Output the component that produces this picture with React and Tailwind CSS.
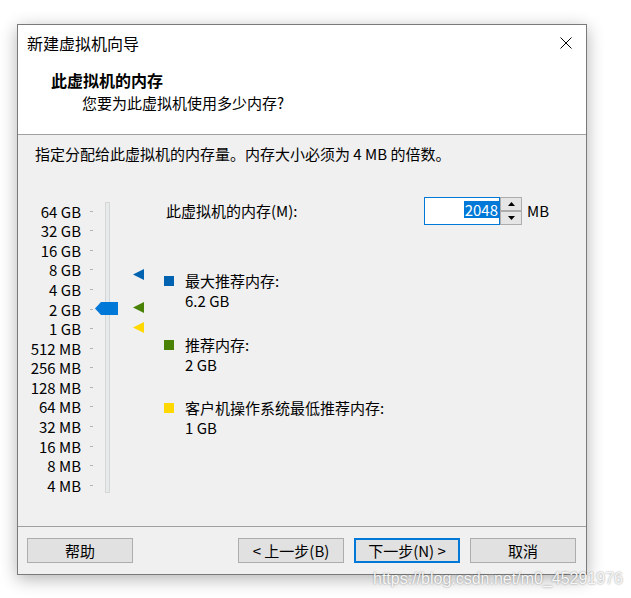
import React from 'react';

const sizes = ['64 GB', '32 GB', '16 GB', '8 GB', '4 GB', '2 GB', '1 GB', '512 MB', '256 MB', '128 MB', '64 MB', '32 MB', '16 MB', '8 MB', '4 MB'];

function Marker({ color, className }) {
  return (
    <svg className={`absolute ${className}`} width="11" height="11" viewBox="0 0 11 11">
      <polygon points="11,0 11,11 0,5.5" fill={color} />
    </svg>
  );
}

function Legend({ color, title, value }) {
  return (
    <div className="flex">
      <div className={`w-[10px] h-[10px] mt-[5px] ${color}`}></div>
      <div className="ml-[11px] leading-[20px]">
        <div>{title}</div>
        <div>{value}</div>
      </div>
    </div>
  );
}

function Button({ children, primary }) {
  return (
    <button
      className={`w-[106px] h-[25px] bg-[#e1e1e1] flex items-center justify-center leading-[20px] ${
        primary ? 'border-2 border-[#0078d7]' : 'border border-[#adadad]'
      }`}
    >
      {children}
    </button>
  );
}

export default function App() {
  return (
    <div className="w-[631px] h-[598px] bg-white relative overflow-hidden pt-[24px] pl-[17px] font-['Noto_Sans_CJK_SC',sans-serif] text-[15px] text-black">
      <div className="w-[570px] h-[551px] border border-[#7a7a7a] bg-white flex flex-col shadow-[0_4px_16px_rgba(0,0,0,0.3)]">
        {/* Header */}
        <div className="h-[110px] border-b border-[#a0a0a0] flex flex-col">
          <div className="h-[36px] flex items-center pl-[9px] pr-[14px]">
            <span className="text-[16px] leading-[20px]">新建虚拟机向导</span>
            <svg className="ml-auto" width="12" height="12" viewBox="0 0 12 12">
              <path d="M0.5 0.5 L11.5 11.5 M11.5 0.5 L0.5 11.5" stroke="#000" strokeWidth="1" />
            </svg>
          </div>
          <div className="pl-[33px] mt-[9px] text-[16px] font-bold leading-[20px]">此虚拟机的内存</div>
          <div className="pl-[64px] mt-[3px] leading-[20px]">您要为此虚拟机使用多少内存?</div>
        </div>

        {/* Body */}
        <div className="flex-1 bg-[#f0f0f0] pt-[9px]">
          <p className="pl-[17px] leading-[20px]">指定分配给此虚拟机的内存量。内存大小必须为 4 MB 的倍数。</p>

          <div className="mt-[33px] flex">
            {/* Slider */}
            <div className="w-[146px] relative flex">
              <div className="pt-[4.5px] flex flex-col">
                {sizes.map((s) => (
                  <div key={s} className="h-[19.57px] flex items-center">
                    <span className="w-[63px] text-right leading-[19px] whitespace-nowrap">{s}</span>
                    <span className="ml-[9px] w-[3px] h-px bg-[#b4b4b4]"></span>
                  </div>
                ))}
              </div>
              <div className="ml-[12px] mt-[5px] w-[5px] h-[291px] border border-[#d6d6d6] bg-[#e7eaea]"></div>

              <svg className="absolute left-[77px] top-[105px]" width="23" height="13" viewBox="0 0 23 13">
                <polygon points="0,6.5 6,0 23,0 23,13 6,13" fill="#0078d7" />
              </svg>
              <Marker color="#0063b1" className="left-[115px] top-[72px]" />
              <Marker color="#498205" className="left-[115px] top-[105px]" />
              <Marker color="#ffd800" className="left-[115px] top-[125px]" />
            </div>

            {/* Right side */}
            <div className="flex flex-col">
              <div className="h-[28px] flex items-center">
                <span className="w-[260px] pl-[2px] leading-[20px]">此虚拟机的内存(M):</span>
                <div className="w-[76px] h-[28px] border border-[#0078d7] bg-white flex items-start justify-end pt-[3px]">
                  <span className="bg-[#0078d7] text-white leading-[17px] px-[1px]">2048</span>
                </div>
                <div className="w-[22px] h-[28px] flex flex-col">
                  <div className="h-[14px] border border-[#adadad] bg-[#e5e5e5] flex items-center justify-center">
                    <svg width="7" height="4" viewBox="0 0 7 4"><polygon points="3.5,0 7,4 0,4" fill="#000" /></svg>
                  </div>
                  <div className="h-[14px] border border-[#adadad] bg-[#e5e5e5] flex items-center justify-center">
                    <svg width="7" height="4" viewBox="0 0 7 4"><polygon points="0,0 7,0 3.5,4" fill="#000" /></svg>
                  </div>
                </div>
                <span className="ml-[5px] leading-[20px]">MB</span>
              </div>

              <div className="mt-[46px] flex flex-col gap-[23.5px]">
                <Legend color="bg-[#0063b1]" title="最大推荐内存:" value="6.2 GB" />
                <Legend color="bg-[#498205]" title="推荐内存:" value="2 GB" />
                <Legend color="bg-[#ffd800]" title="客户机操作系统最低推荐内存:" value="1 GB" />
              </div>
            </div>
          </div>
        </div>

        {/* Footer */}
        <div className="h-[48px] border-t border-[#a0a0a0] bg-[#f0f0f0] flex items-start pt-[11px] pl-[9px] pr-[10px]">
          <Button>帮助</Button>
          <div className="ml-auto flex gap-[10px]">
            <Button>&lt; 上一步(B)</Button>
            <Button primary>下一步(N) &gt;</Button>
            <Button>取消</Button>
          </div>
        </div>
      </div>

      <div className="absolute left-[373px] top-[570px] font-['Liberation_Sans',sans-serif] text-[16px] leading-[18px] text-[#f6f6f6] [text-shadow:0_0_2px_rgba(0,0,0,0.45)] whitespace-nowrap">
        https://blog.csdn.net/m0_45291976
      </div>
    </div>
  );
}
